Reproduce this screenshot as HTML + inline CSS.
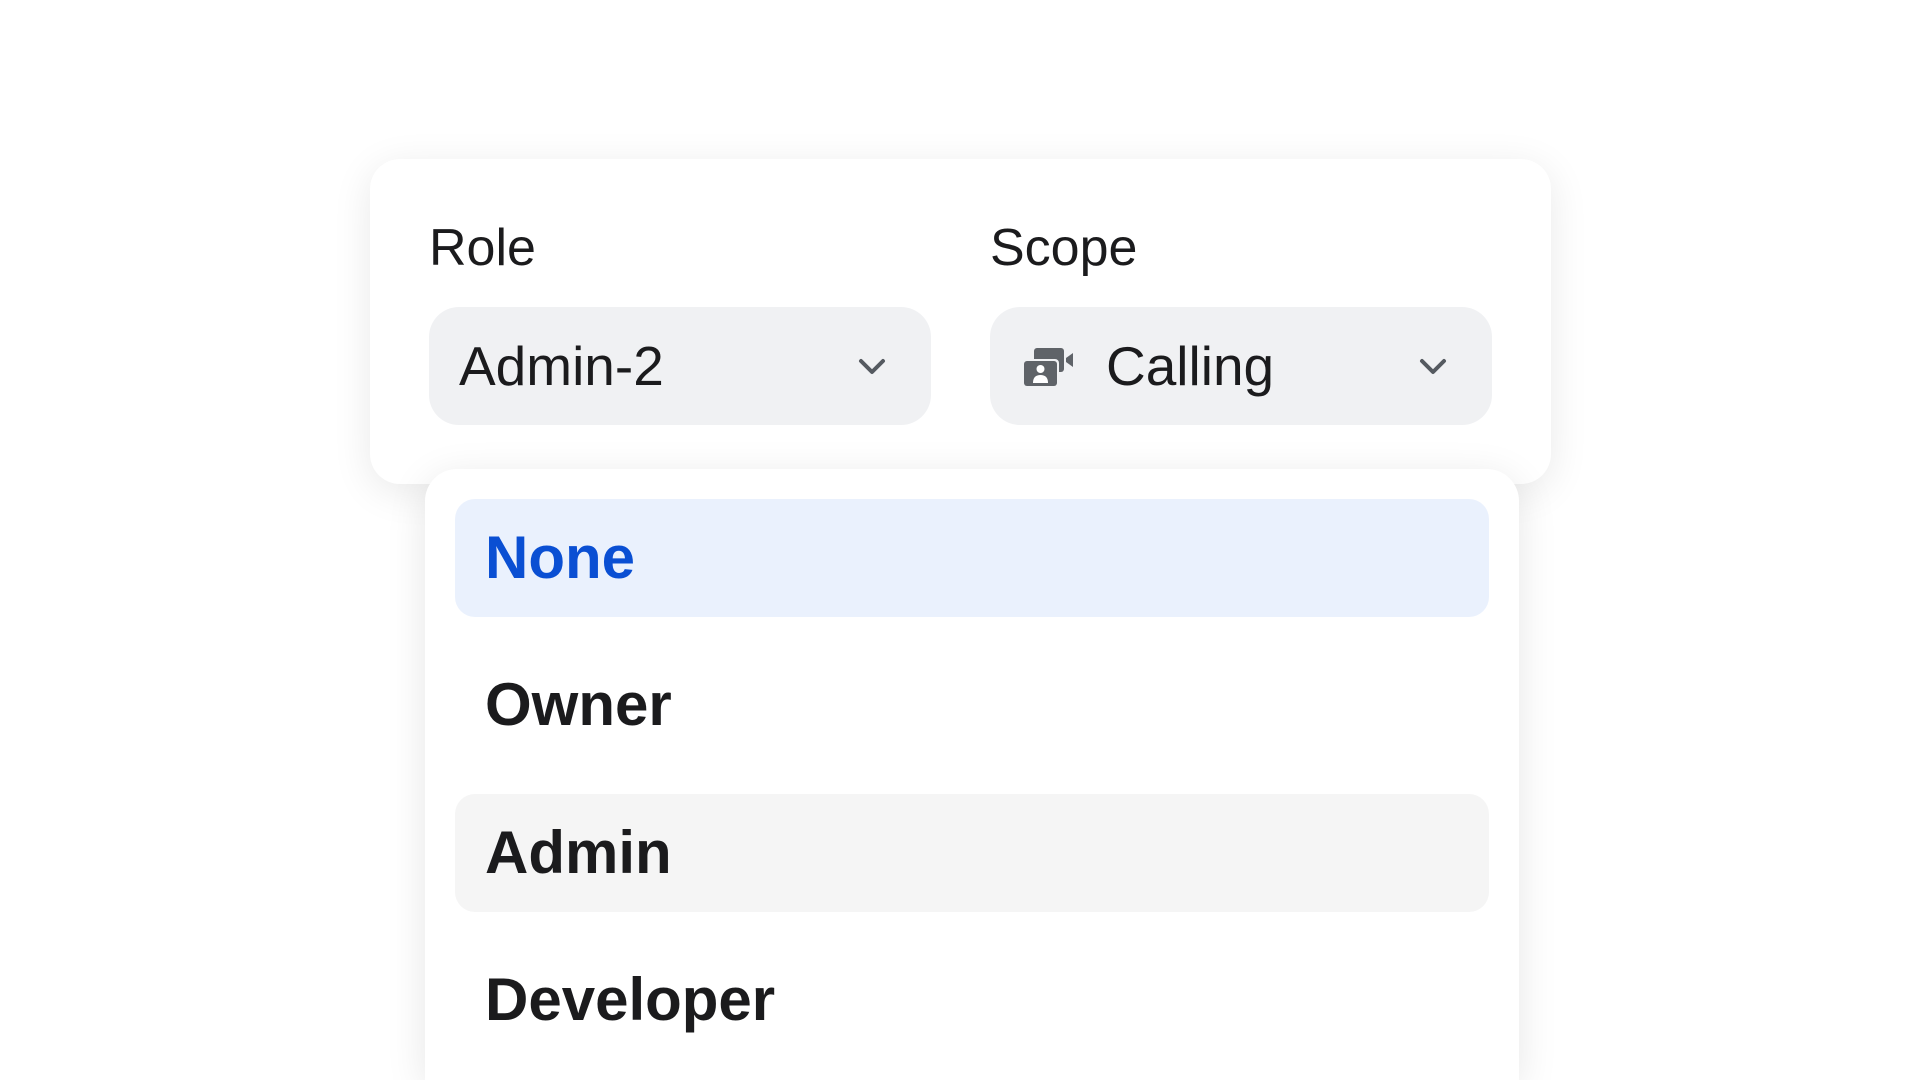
<!DOCTYPE html>
<html><head><meta charset="utf-8"><style>
*{box-sizing:border-box;margin:0;padding:0}
html,body{width:1920px;height:1080px;overflow:hidden}
body{background:#fff;position:relative;font-family:"Liberation Sans",Arial,sans-serif;color:#1b1b1d}
.card{position:absolute;left:370px;top:159px;width:1181px;height:325px;background:#fff;border-radius:30px;box-shadow:0 8px 40px rgba(0,0,0,0.09)}
.lbl{position:absolute;top:218px;font-size:52px;line-height:60px}
.sel{position:absolute;top:307px;width:502px;height:118px;background:#f0f1f3;border-radius:30px}
.sel .t{position:absolute;top:29px;font-size:55px;line-height:60px}
.chev{position:absolute;right:44px;top:48px}
.dd{position:absolute;left:425px;top:469px;width:1094px;height:611px;background:#fff;border-radius:32px 32px 0 0;box-shadow:0 8px 40px rgba(0,0,0,0.1)}
.it{position:absolute;left:30px;width:1034px;height:118px;border-radius:20px;font-weight:bold;font-size:60px;line-height:118px;padding-left:30px}
</style></head><body>
<div class="card"></div>
<div class="lbl" style="left:429px">Role</div>
<div class="lbl" style="left:990px">Scope</div>
<div class="sel" style="left:429px"><div class="t" style="left:30px">Admin-2</div>
<svg class="chev" width="30" height="22" viewBox="0 0 30 22"><path d="M4 6 L15 17 L26 6" fill="none" stroke="#555a60" stroke-width="4" stroke-linecap="round" stroke-linejoin="round"/></svg></div>
<div class="sel" style="left:990px">
<svg style="position:absolute;left:34px;top:41px" width="52" height="38" viewBox="0 0 52 38"><rect x="10" y="0" width="30" height="24" rx="3" fill="#5f6368"/><path d="M42 10 L49 5 L49 19 L42 14 Z" fill="#5f6368"/><rect x="-1" y="11" width="36" height="28" rx="4" fill="#f0f1f3"/><rect x="0" y="13" width="33" height="25" rx="3" fill="#5f6368"/><circle cx="16.5" cy="21" r="4" fill="#fff"/><path d="M9 35 Q9 27 16.5 27 Q24 27 24 35 Z" fill="#fff"/></svg>
<div class="t" style="left:116px">Calling</div>
<svg class="chev" width="30" height="22" viewBox="0 0 30 22"><path d="M4 6 L15 17 L26 6" fill="none" stroke="#555a60" stroke-width="4" stroke-linecap="round" stroke-linejoin="round"/></svg></div>
<div class="dd">
<div class="it" style="top:30px;background:#eaf1fd;color:#0a4fd3">None</div>
<div class="it" style="top:177px">Owner</div>
<div class="it" style="top:325px;background:#f5f5f5">Admin</div>
<div class="it" style="top:472px">Developer</div>
</div>
</body></html>
